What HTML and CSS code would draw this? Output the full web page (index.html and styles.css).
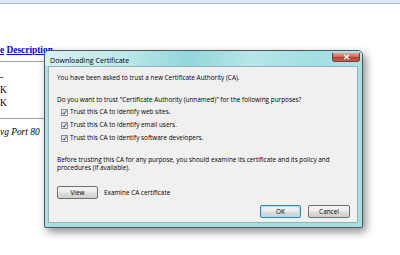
FILE: index.html
```html
<!DOCTYPE html>
<html>
<head>
<meta charset="utf-8">
<link rel="stylesheet" href="styles.css">
</head>
<body>
<div class="topbar"></div>
<div class="page">
  <div class="hdr"><a href="#">e</a> <a href="#">Description</a></div>
  <div class="rule"></div>
  <div class="row r1">-</div>
  <div class="row r2">K</div>
  <div class="row r3">K</div>
  <div class="rule rule2"></div>
  <div class="row r4"><i>vg Port 80</i></div>
</div>

<div class="dialog">
  <div class="titlebar">
    <span class="title">Downloading Certificate</span>
    <span class="close"><svg width="7" height="6" viewBox="0 0 7 6"><path d="M1 0.8 L6 5.2 M6 0.8 L1 5.2" stroke="#fff" stroke-width="1.4"/></svg></span>
  </div>
  <div class="content">
    <p class="l1">You have been asked to trust a new Certificate Authority (CA).</p>
    <p class="l2">Do you want to trust "Certificate Authority (unnamed)" for the following purposes?</p>
    <div class="checks">
      <label class="chk"><span class="box"><svg width="5" height="5" viewBox="0 0 5 5"><path d="M0.6 2.6 L2 4.2 L4.4 0.6" fill="none" stroke="#2b3f8a" stroke-width="1"/></svg></span>Trust this CA to identify web sites.</label>
      <label class="chk"><span class="box"><svg width="5" height="5" viewBox="0 0 5 5"><path d="M0.6 2.6 L2 4.2 L4.4 0.6" fill="none" stroke="#2b3f8a" stroke-width="1"/></svg></span>Trust this CA to identify email users.</label>
      <label class="chk"><span class="box"><svg width="5" height="5" viewBox="0 0 5 5"><path d="M0.6 2.6 L2 4.2 L4.4 0.6" fill="none" stroke="#2b3f8a" stroke-width="1"/></svg></span>Trust this CA to identify software developers.</label>
    </div>
    <p class="para">Before trusting this CA for any purpose, you should examine its certificate and its policy and<br>procedures (if available).</p>
    <div class="viewrow">
      <span class="btn">View</span>
      <span class="vlabel">Examine CA certificate</span>
    </div>
    <div class="actions">
      <span class="btn def">OK</span>
      <span class="btn">Cancel</span>
    </div>
  </div>
</div>
</body>
</html>
```

FILE: styles.css
```css
html, body {
  margin: 0;
  padding: 0;
  background: #fff;
  width: 400px;
  height: 255px;
  overflow: hidden;
  font-family: "Liberation Serif", serif;
}

.topbar {
  height: 3px;
  background: #dce8f6;
  border-bottom: 1px solid #a9b8cc;
}

.page {
  padding-top: 41px;
  width: 120px;
}

.hdr {
  font-weight: bold;
  font-size: 9.4px;
  line-height: 10px;
  height: 10px;
}
.hdr a {
  color: #0000ee;
}

.rule {
  margin-top: 6px;
  border-top: 1px solid #a0a0a0;
  width: 100%;
}

.row {
  font-size: 9.4px;
  line-height: 10px;
  height: 10px;
  color: #000;
}
.r1 { margin-top: 10px; }
.r2 { margin-top: 3px; }
.r3 { margin-top: 3px; }
.rule2 { margin-top: 10px; }
.r4 { margin-top: 8px; }

.dialog {
  position: absolute;
  left: 44px;
  top: 50px;
  width: 317px;
  height: 176px;
  border: 1px solid #4c5a5e;
  border-radius: 5px 5px 2px 2px;
  background: #a6e0e3;
  box-shadow: 3px 4px 8px rgba(0, 0, 0, 0.45);
  display: flex;
  flex-direction: column;
  font-family: "Open Sans", "Noto Sans", sans-serif;
  color: #000;
}

.titlebar {
  height: 15px;
  display: flex;
  align-items: flex-start;
  justify-content: space-between;
  background: linear-gradient(100deg, #d9f1f2 0%, #bde8ea 25%, #93d6da 45%, #b6e6e8 65%, #a2dee2 85%, #b0e4e6 100%);
  border-radius: 4px 4px 0 0;
  padding-left: 5px;
}

.title {
  font-size: 7.1px;
  line-height: 7px;
  margin-top: 6px;
  color: #000;
}

.close {
  width: 26px;
  height: 8px;
  margin-top: 2px;
  margin-right: 2px;
  border: 1px solid #7a3b33;
  border-top: none;
  border-radius: 0 0 3px 3px;
  background: linear-gradient(#e2a398 0%, #cf6b5c 45%, #b8412e 55%, #c6604b 100%);
  display: flex;
  align-items: center;
  justify-content: center;
}

.content {
  flex: 1;
  margin: 0 4px 4px 3px;
  background: #f0f0f0;
  border: 1px solid #8fb5b8;
  padding: 0 7px 0 8px;
  font-size: 6.4px;
  line-height: 8px;
}

p { margin: 0; }

.l1 { margin-top: 7px; }
.l2 { margin-top: 14px; }

.checks {
  margin-top: 4px;
  padding-left: 4px;
  display: flex;
  flex-direction: column;
  gap: 5px;
}

.chk {
  display: flex;
  align-items: center;
  height: 8px;
}

.box {
  width: 5px;
  height: 5px;
  border: 1px solid #8e8f8f;
  background: linear-gradient(#dcdcdc, #f8f8f8);
  margin-right: 2px;
  display: flex;
  align-items: center;
  justify-content: center;
}

.para { margin-top: 14px; }

.viewrow {
  margin-top: 14px;
  display: flex;
  align-items: center;
}

.btn {
  box-sizing: border-box;
  width: 41px;
  height: 13px;
  border: 1px solid #707070;
  border-radius: 2px;
  background: linear-gradient(#f3f3f3 0%, #ebebeb 48%, #dddddd 52%, #cfcfcf 100%);
  display: flex;
  align-items: center;
  justify-content: center;
  font-size: 6.4px;
  color: #000;
}

.vlabel { margin-left: 6px; }

.actions {
  margin-top: 6px;
  display: flex;
  justify-content: flex-end;
  gap: 7px;
}

.btn.def {
  border-color: #3c7fb1;
  box-shadow: inset 0 0 0 1px #a8e3f5;
}

.actions .btn:last-child { width: 42px; }
```
